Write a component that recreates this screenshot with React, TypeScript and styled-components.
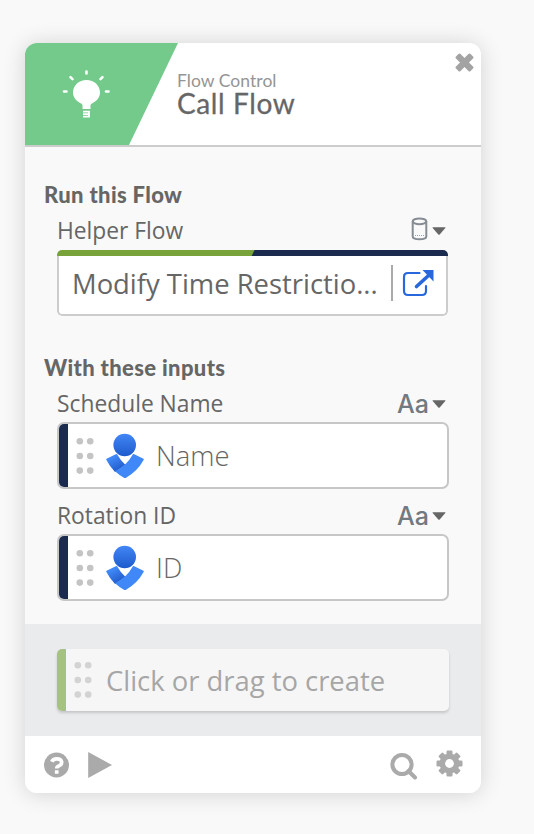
import React from "react";
import styled, { createGlobalStyle } from "styled-components";

const Global = createGlobalStyle`
  * { box-sizing: border-box; }
  body { margin: 0; background: #f9f9f9; font-family: "Open Sans", sans-serif; color: #666; }
  svg { display: block; flex: none; }
`;
const Page = styled.main`
  width: 534px; height: 834px; padding: 43px 0 0 25px; overflow: hidden;
`;
const Card = styled.article`
  width: 456px; height: 750px; display: flex; flex-direction: column; overflow: hidden;
  border-radius: 12px; background: #f9f9f9;
  box-shadow: 0 1px 22px rgba(0, 0, 0, 0.16);
`;
const Header = styled.header`
  height: 104px; display: flex; background: #fff; border-bottom: 2px solid #ccc; flex: none;
`;
const Banner = styled.div`
  width: 153px; height: 102px; padding: 26px 0 0 37px; background: #73ca8b;
  clip-path: polygon(0 0, 100% 0, 104px 100%, 0 100%);
`;
const Titles = styled.div`
  flex: 1; display: flex; flex-direction: column; padding-top: 28px; margin-left: -1px; white-space: nowrap;
`;
const Category = styled.span`
  font: 400 17.5px/20px Lato, sans-serif; color: #959595; letter-spacing: 0.05px;
`;
const Title = styled.h1`
  margin: 0; font: 400 28px/24px Lato, sans-serif; color: #666; letter-spacing: 0.6px;
  -webkit-text-stroke: 0.3px #666;
`;
const Close = styled.div`padding: 10px 7px;`;
const Body = styled.div`height: 477px; padding: 0 32px 0 19px; flex: none;`;
const Heading = styled.h2<{ $top: number }>`
  margin: 0; padding-top: ${p => p.$top}px; font: 900 22px/28px Lato, sans-serif; white-space: nowrap;
  letter-spacing: 0.35px;
`;
const Field = styled.section<{ $gap: number }>`padding: ${p => p.$gap}px 0 0 13px;`;
const Label = styled.div`
  height: 30px; display: flex; justify-content: space-between; align-items: center;
  font-size: 22.8px; line-height: 30px; padding-right: 3px; margin-bottom: 3px;
`;
const TypePicker = styled.span<{ $gap: number; $lift?: number }>`
  display: flex; align-items: center; gap: ${p => p.$gap}px; padding-bottom: ${p => p.$lift ?? 0}px;
  font: 500 25px/30px Inter, sans-serif; color: #717981;
`;
const CylinderBox = styled.span`padding-bottom: 5px;`;
const Select = styled.div`
  height: 66px; width: 391px; margin-top: 4px; border-radius: 5px; overflow: hidden;
`;
const Stripe = styled.div`
  height: 5.5px; background: linear-gradient(115deg, #78a23a 50%, #1a2b4f 50.3%);
`;
const Value = styled.div`
  display: flex; align-items: center; height: 60.5px; padding: 0 0 3px 13px; font-size: 27.4px; white-space: nowrap;
  border: 2px solid #ccc; border-top: 0; border-radius: 0 0 5px 5px; background: #fff;
`;
const ValueText = styled.span`width: 319px;`;
const Divider = styled.span`width: 2px; height: 36px; background: #aaa; margin-right: 9px;`;
const Input = styled.div`
  height: 67px; width: 392px; display: flex; align-items: center; border: 2px solid #c7c7c7;
  border-radius: 7px; background: #fff; overflow: hidden; font-size: 27.4px; font-weight: 300;
`;
const Edge = styled.span<{ $c: string }>`width: 9px; height: 100%; background: ${p => p.$c}; margin-right: 8px;`;
const InputText = styled.span`margin-left: 12px;`;
const CreateBand = styled.div`
  height: 112px; flex: none; padding: 25px 32px; background: #eaebed;
`;
const Create = styled.div`
  height: 62px; width: 392px; display: flex; align-items: center; border-radius: 5px; background: #f6f6f6;
  overflow: hidden; font-size: 27.4px; color: #a6a6a6; box-shadow: 0 2px 3px rgba(0,0,0,.16);
`;
const CreateText = styled.span`margin-left: 14px; white-space: nowrap;`;
const Footer = styled.footer`
  flex: 1; display: flex; align-items: flex-start; background: #fff; padding: 14px 18px 0 19px;
`;
const Slot = styled.span<{ $x?: number; $y?: number; $push?: boolean }>`
  margin-left: ${p => (p.$push ? "auto" : `${p.$x ?? 0}px`)}; padding-top: ${p => p.$y ?? 0}px;
`;

const Bulb = () => (
  <svg width="50" height="50" viewBox="0 0 50 50">
    <g stroke="#fff" strokeWidth="2.6" strokeLinecap="round">
      <path d="M24.5 2.5v2M8.5 8.2l2 2M40.5 8.2l-2 2M2 22.5h2.5M44 22.5h2.5" />
    </g>
    <path fill="#fff" d="M24.5 11c-7.5 0-13.5 5.3-13.5 12.500 0 6 4.800 9.500 8.500 11.200q1 .5 1 1.800v3.500h8v-3.500q0-1.300 1-1.800c3.700-1.700 8.500-5.200 8.500-11.200 0-7.200-6-12.500-13.500-12.500z" />
    <path fill="none" stroke="#fff" strokeWidth="1.8" d="M21 42.700h6v5h-6M21 45.200h6" />
  </svg>
);
const Dots = ({ color }: { color: string }) => (
  <svg width="18" height="38" viewBox="0 0 18 38" fill={color}>
    {[4.3, 19, 33.6].map(y => <g key={y}><circle cx="3.8" cy={y} r="3.3" /><circle cx="14.2" cy={y} r="3.3" /></g>)}
  </svg>
);
const Caret = () => <svg width="14" height="8" viewBox="0 0 14 8"><path d="M1 .2h12q.8.100.3.800L7.700 7.500q-.7.600-1.400 0L.7 1Q.2.300 1 .2z" fill="#666" /></svg>;
const Cylinder = () => (
  <svg width="17" height="24" viewBox="0 0 17 24" fill="none" stroke="#858c93" strokeWidth="2">
    <ellipse cx="8.5" cy="4.3" rx="6.8" ry="2.9" /><path d="M1.700 4.300v15.200c0 1.600 3 2.800 6.800 2.800s6.800-1.200 6.800-2.800V4.300" /><path d="M4 18.500h9" strokeWidth=".8" strokeDasharray="1 1" />
  </svg>
);
const OpenLink = () => (
  <svg width="32" height="28" viewBox="0 0 32 28" fill="none" stroke="#2868dc">
    <path strokeWidth="2.2" strokeLinecap="round" d="M17.500 4H6Q2 4 2 8v14q0 4 4 4h14q4 0 4-4v-5" /><path strokeWidth="3.6" strokeLinecap="round" d="M14.500 17.500L26 7" /><path fill="#2868dc" stroke="none" d="M20.500 1H31.500v11.500z" />
  </svg>
);
const Person = ({ id }: { id: string }) => (
  <svg width="38" height="46" viewBox="0 0 38 46">
    <defs><linearGradient id={id} x1="0" y1="0" x2="0" y2="1"><stop stopColor="#4386f5" /><stop offset="1" stopColor="#1d5bcd" /></linearGradient>
      <linearGradient id={`${id}-arm`} x1="0" y1="0" x2=".6" y2="1"><stop offset=".3" stopColor="#4087f7" /><stop offset="1" stopColor="#2059c8" /></linearGradient></defs>
    <circle cx="18.7" cy="12" r="11.3" fill={`url(#${id})`} />
    <path fill={`url(#${id}-arm)`} d="M.6 25.800L9.700 21.200q1.200-.5 1.900.7 3 5.600 7.900 10L9 39Q4 34 .4 27.100-.1 26.200.6 25.800z" />
    <path fill="#4087f7" d="M37.400 25.800l-9.100-4.600q-1.200-.5-1.900.7Q21 32 9 38.300q4.500 4.200 9.300 6.600.7.300 1.400 0Q31 39 37.600 27.100q.5-.9-.2-1.300z" />
  </svg>
);
const Gear = () => (
  <svg width="27" height="27" viewBox="-13.5 -13.5 27 27">
    {[0, 45, 90, 135].map(a => <rect key={a} x="-3" y="-13" width="6" height="26" rx="1.2" fill="#aaa" transform={`rotate(${a})`} />)}
    <circle r="10" fill="#aaa" /><circle r="4.4" fill="#fff" />
  </svg>
);

const TextField = ({ label, value, gap, id }: { label: string; value: string; gap: number; id: string }) => (
  <Field $gap={gap}>
    <Label>{label}<TypePicker $gap={3} $lift={1}>Aa<Caret /></TypePicker></Label>
    <Input><Edge $c="#1a2b4f" /><Dots color="#c4c4c4" /><Slot $x={12}><Person id={id} /></Slot><InputText>{value}</InputText></Input>
  </Field>
);

export default function App() {
  return (
    <><Global /><Page><Card>
      <Header>
        <Banner><Bulb /></Banner>
        <Titles><Category>Flow Control</Category><Title>Call Flow</Title></Titles>
        <Close><svg width="19" height="19" viewBox="-9.5 -9.5 19 19" fill="#a3a3a3">
          <rect x="-10.3" y="-3.2" width="20.6" height="6.4" rx="1.5" transform="rotate(45)" />
          <rect x="-10.3" y="-3.2" width="20.6" height="6.4" rx="1.5" transform="rotate(-45)" />
        </svg></Close>
      </Header>
      <Body>
        <Heading $top={34}>Run this Flow</Heading>
        <Field $gap={7}>
          <Label>Helper Flow<TypePicker $gap={4}><CylinderBox><Cylinder /></CylinderBox><Caret /></TypePicker></Label>
          <Select><Stripe /><Value><ValueText>Modify Time Restrictio...</ValueText><Divider /><OpenLink /></Value></Select>
        </Field>
        <Heading $top={38}>With these inputs</Heading>
        <TextField label="Schedule Name" value="Name" gap={7} id="name" />
        <TextField label="Rotation ID" value="ID" gap={12} id="rotation" />
      </Body>
      <CreateBand><Create><Edge $c="#a5c283" /><Dots color="#d3d3d3" /><CreateText>Click or drag to create</CreateText></Create></CreateBand>
      <Footer>
        <Slot $y={2}><svg width="25" height="26" viewBox="0 0 25 26"><circle cx="12.5" cy="13" r="12.5" fill="#aaa" /><path d="M7.800 9.800Q9 6.800 12.700 6.800c6 0 6.200 5.400 2.200 7.100-1.700.7-2.200 1.200-2.200 2.600M12.700 18.300v3.500" fill="none" stroke="#fff" strokeWidth="3.7" /></svg></Slot>
        <Slot $x={19} $y={2}><svg width="24" height="26" viewBox="0 0 24 26"><path d="M.2 0L24 13 .2 26z" fill="#aaa" /></svg></Slot>
        <Slot $push $y={2}><svg width="28" height="28" viewBox="0 0 28 28" fill="none" stroke="#aaa" strokeWidth="4"><circle cx="12" cy="12.5" r="9.6" /><path d="M18.500 19l6.500 6.500" strokeLinecap="round" /></svg></Slot>
        <Slot $x={18}><Gear /></Slot>
      </Footer>
    </Card></Page></>
  );
}
